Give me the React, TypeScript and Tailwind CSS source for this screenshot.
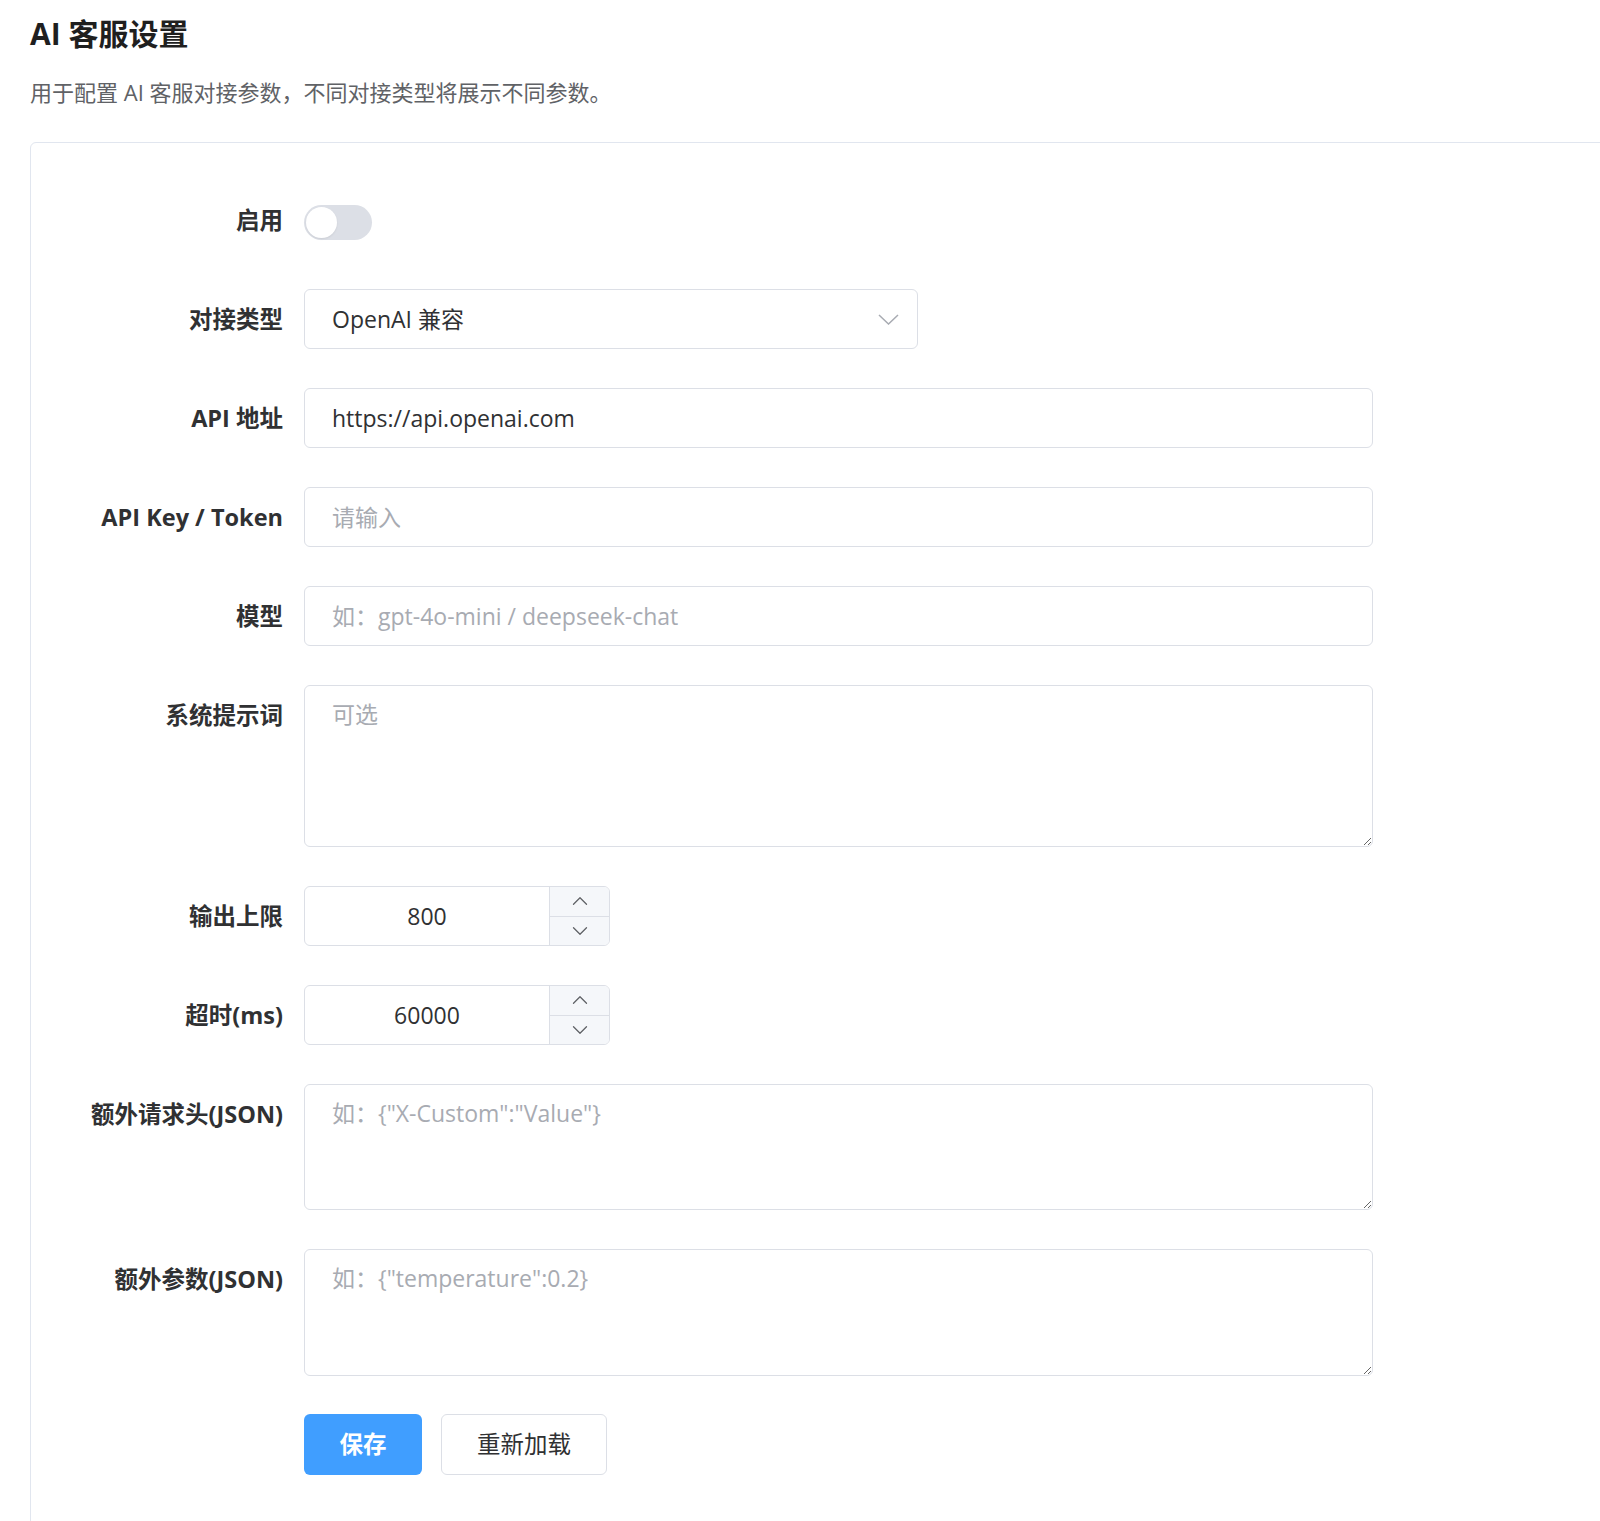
import { ChevronDown, ChevronUp } from "lucide-react";

const font = { fontFamily: '"Open Sans", "Noto Sans CJK SC", sans-serif' };

function Label({ children }: { children: React.ReactNode }) {
  return (
    <div className="w-[273px] shrink-0 pr-[21px] text-right text-[23.5px] leading-[60px] font-bold text-[#303133]">
      {children}
    </div>
  );
}

function Row({ label, children }: { label: string; children: React.ReactNode }) {
  return (
    <div className="flex items-start mb-[39px]">
      <Label>{label}</Label>
      <div className="flex-1 min-w-0">{children}</div>
    </div>
  );
}

function TextInput({ value, placeholder }: { value?: string; placeholder?: string }) {
  return (
    <input
      readOnly
      value={value ?? ""}
      placeholder={placeholder}
      style={font}
      className="w-[1069px] h-[60px] rounded-[6px] border border-[#dcdfe6] bg-white px-[27px] text-[23px] text-[#303133] outline-none placeholder:text-[#a8abb2]"
    />
  );
}

function TextArea({ placeholder, h }: { placeholder: string; h: string }) {
  return (
    <textarea
      readOnly
      placeholder={placeholder}
      style={font}
      className={`block w-[1069px] ${h} rounded-[6px] border border-[#dcdfe6] bg-white px-[27px] py-[12px] text-[23px] leading-[32px] text-[#303133] outline-none placeholder:text-[#a8abb2]`}
    />
  );
}

function NumberInput({ value }: { value: string }) {
  return (
    <div className="flex w-[306px] h-[60px] rounded-[6px] border border-[#dcdfe6] bg-white overflow-hidden">
      <div className="flex-1 flex items-center justify-center text-[23px] text-[#303133]">{value}</div>
      <div className="w-[60px] flex flex-col border-l border-[#dcdfe6] bg-[#f5f7fa]">
        <div className="flex-1 flex items-center justify-center border-b border-[#dcdfe6] text-[#606266]">
          <ChevronUp className="w-[26px] h-[26px]" strokeWidth={1.2} />
        </div>
        <div className="flex-1 flex items-center justify-center text-[#606266]">
          <ChevronDown className="w-[26px] h-[26px]" strokeWidth={1.2} />
        </div>
      </div>
    </div>
  );
}

export default function App() {
  return (
    <div style={font} className="h-[1521px] overflow-hidden bg-white pl-[30px] pt-[14px]">
      <h2 className="text-[30px] leading-[40px] font-bold text-[#1f1f1f]">AI 客服设置</h2>
      <p className="mt-[23px] text-[22px] leading-[30px] text-[#606266]">
        用于配置 AI 客服对接参数，不同对接类型将展示不同参数。
      </p>

      <div className="mt-[35px] -mr-[20px] rounded-tl-[6px] border border-[#e1e6ef] bg-white pt-[47px] pb-[48px]">
        <div className="flex items-start mb-[39px]">
          <Label>启用</Label>
          <div className="mt-[15px] w-[68px] h-[35px] rounded-full bg-[#dcdfe6] p-[2px] flex items-center">
            <div className="w-[31px] h-[31px] rounded-full bg-white shadow-[0_1px_2px_rgba(0,0,0,0.08)]" />
          </div>
        </div>

        <Row label="对接类型">
          <div className="flex items-center justify-between w-[614px] h-[60px] rounded-[6px] border border-[#dcdfe6] bg-white pl-[27px] pr-[18px]">
            <span className="text-[23px] text-[#303133]">OpenAI 兼容</span>
            <svg width="21" height="11" viewBox="0 0 21 11" fill="none" stroke="#a8abb2" strokeWidth="1.5">
              <path d="M1 1l9.5 9 9.5-9" />
            </svg>
          </div>
        </Row>

        <Row label="API 地址">
          <TextInput value="https://api.openai.com" />
        </Row>

        <Row label="API Key / Token">
          <TextInput placeholder="请输入" />
        </Row>

        <Row label="模型">
          <TextInput placeholder="如：gpt-4o-mini / deepseek-chat" />
        </Row>

        <Row label="系统提示词">
          <TextArea placeholder="可选" h="h-[162px]" />
        </Row>

        <Row label="输出上限">
          <NumberInput value="800" />
        </Row>

        <Row label="超时(ms)">
          <NumberInput value="60000" />
        </Row>

        <Row label="额外请求头(JSON)">
          <TextArea placeholder={'如：{"X-Custom":"Value"}'} h="h-[126px]" />
        </Row>

        <Row label="额外参数(JSON)">
          <TextArea placeholder={'如：{"temperature":0.2}'} h="h-[127px]" />
        </Row>

        <div className="flex items-center gap-[19px] pl-[273px] -mt-[1px]">
          <button className="w-[118px] h-[61px] rounded-[6px] bg-[#409eff] text-[23.5px] font-bold text-white">
            保存
          </button>
          <button className="w-[166px] h-[61px] rounded-[6px] border border-[#dcdfe6] bg-white text-[23.5px] text-[#303133]">
            重新加载
          </button>
        </div>
      </div>
    </div>
  );
}
